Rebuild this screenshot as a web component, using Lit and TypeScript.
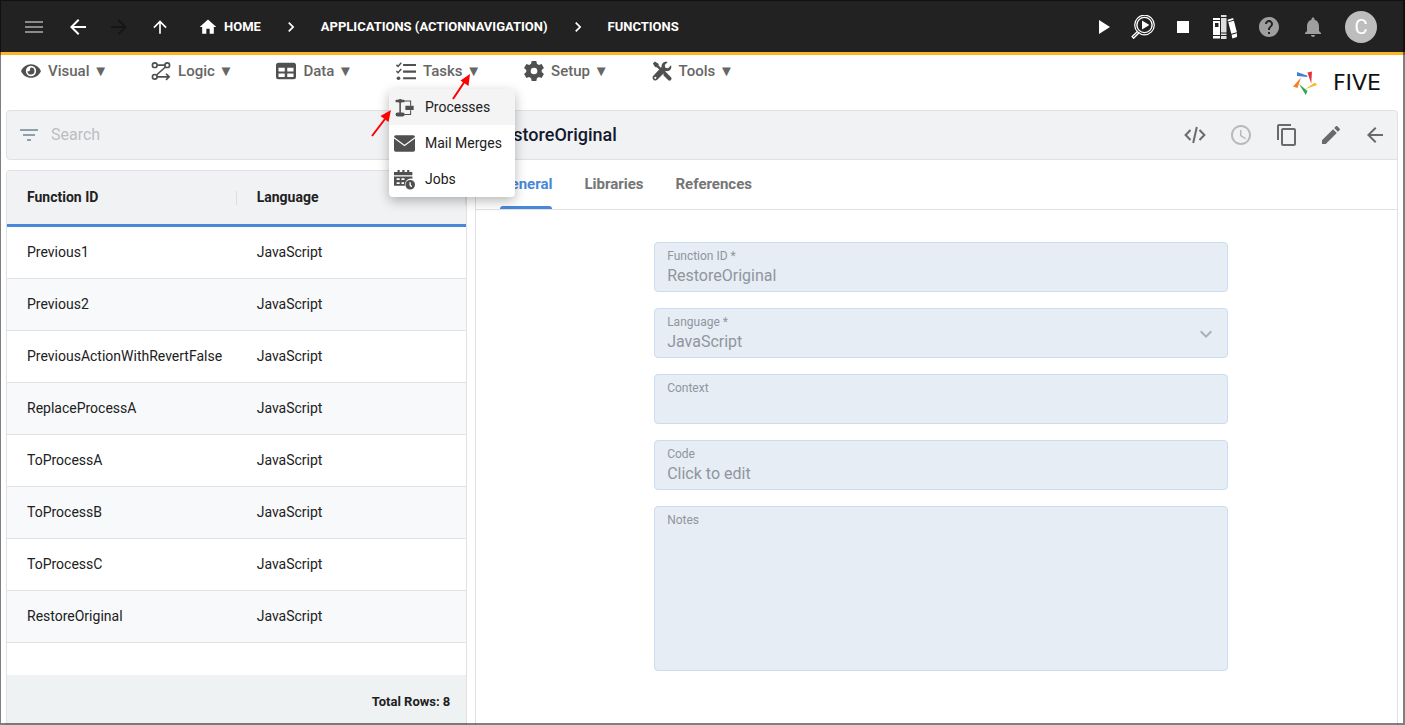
import { LitElement, html, svg, css, nothing } from "lit";
import { customElement, property, state } from "lit/decorators.js";
import { classMap } from "lit/directives/class-map.js";

const icons: Record<string, unknown> = {
  menu: svg`<path d="M3 18h18v-2H3v2zm0-5h18v-2H3v2zm0-7v2h18V6H3z"/>`,
  back: svg`<path d="M20 11H7.83l5.59-5.59L12 4l-8 8 8 8 1.41-1.41L7.83 13H20v-2z"/>`,
  forward: svg`<path d="M12 4l-1.41 1.41L16.17 11H4v2h12.17l-5.58 5.59L12 20l8-8z"/>`,
  up: svg`<path d="M4 12l1.41 1.41L11 7.83V20h2V7.83l5.58 5.59L20 12l-8-8-8 8z"/>`,
  home: svg`<path d="M10 20v-6h4v6h5v-8h3L12 3 2 12h3v8z"/>`,
  chevron: svg`<path d="M10 6L8.59 7.41 13.17 12l-4.58 4.59L10 18l6-6z"/>`,
  down: svg`<path d="M7.41 8.59L12 13.17l4.59-4.58L18 10l-6 6-6-6z"/>`,
  play: svg`<path d="M8 5v14l11-7z"/>`,
  stop: svg`<path d="M6 6h12v12H6z"/>`,
  inspect: svg`<g fill="none" stroke="currentColor"><circle cx="13.5" cy="10" r="9.8" stroke-width="1.2"/><circle cx="13.5" cy="10" r="7.6" stroke-width="1.4"/><path d="M6.8 16.2l-5.6 5.4 1.4 1.6 5.8-5.6" stroke-width="1.4"/></g><path d="M11 5.5v9l7.4-4.5z"/>`,
  books: svg`<path d="M0 3h7v2H0zM0 6h7v14H0zM0 21h7v2.500H0z"/><path d="M8 0h5.500v2H8zM8 3h5.500v14.500H8zM8 18.500h5.500v1.500H8zM8 21h5.500v3H8z" opacity=".85"/><path d="M14.500 4.800l5.600-1.700.5 1.700-5.600 1.600zM15.300 7.300l5.600-1.600 3 11.500-5.600 1.600zM18.600 19.800l5.500-1.600.9 3.400-5.600 1.900z"/><path d="M2 8h3.500v4H2z" fill="#222"/>`,
  help: svg`<path d="M12 2C6.480 2 2 6.480 2 12s4.480 10 10 10 10-4.480 10-10S17.520 2 12 2zm1 17h-2v-2h2v2zm2.070-7.750l-.9.920C13.450 12.900 13 13.500 13 15h-2v-.5c0-1.100.450-2.100 1.170-2.830l1.240-1.260c.370-.360.590-.860.590-1.410 0-1.100-.9-2-2-2s-2 .9-2 2H8c0-2.210 1.790-4 4-4s4 1.790 4 4c0 .880-.360 1.680-.930 2.250z"/>`,
  bell: svg`<path d="M12 22c1.100 0 2-.9 2-2h-4c0 1.100.9 2 2 2zm6-6v-5c0-3.070-1.640-5.640-4.500-6.320V4c0-.830-.670-1.500-1.500-1.500s-1.500.670-1.500 1.500v.680C7.630 5.360 6 7.920 6 11v5l-2 2v1h16v-1l-2-2z"/>`,
  filter: svg`<path d="M10 18h4v-2h-4v2zM3 6v2h18V6H3zm3 7h12v-2H6v2z"/>`,
  code: svg`<path d="M7.500 7L2.600 12l4.900 5M16.500 7l4.900 5-4.900 5M13.800 4l-3.600 16" fill="none" stroke="currentColor" stroke-width="2"/>`,
  clock: svg`<path d="M11.990 2C6.470 2 2 6.480 2 12s4.470 10 9.990 10C17.520 22 22 17.520 22 12S17.520 2 11.990 2zM12 20c-4.420 0-8-3.580-8-8s3.580-8 8-8 8 3.580 8 8-3.580 8-8 8zm.5-13H11v6l5.250 3.150.750-1.230-4.500-2.670z"/>`,
  copy: svg`<path d="M16 1H4c-1.100 0-2 .9-2 2v14h2V3h12V1zm3 4H8c-1.100 0-2 .9-2 2v14c0 1.100.9 2 2 2h11c1.100 0 2-.9 2-2V7c0-1.100-.9-2-2-2zm0 16H8V7h11v14z"/>`,
  edit: svg`<path d="M3 17.250V21h3.750L17.810 9.940l-3.750-3.750L3 17.250zM20.710 7.040c.390-.390.390-1.020 0-1.410l-2.340-2.340c-.390-.390-1.020-.390-1.410 0l-1.830 1.830 3.750 3.750 1.830-1.830z"/>`,
  visual: svg`<path fill-rule="evenodd" d="M12 3.800C6.500 3.800 2 7.300 0 12c2 4.700 6.500 8.200 12 8.200s10-3.500 12-8.200c-2-4.700-6.500-8.200-12-8.200zm0 14.400a6.200 6.200 0 1 1 0-12.400 6.200 6.200 0 0 1 0 12.400z"/><path d="M12 7.800a4.200 4.200 0 1 1-4.200 4.400c1.800.6 3.800-.9 3-3.300z"/>`,
  logic: svg`<g fill="none" stroke="currentColor" stroke-width="2"><circle cx="4.500" cy="5" r="2.800"/><circle cx="19.500" cy="5" r="2.800"/><circle cx="4.500" cy="19" r="2.800"/><path d="M7.300 5h9.400M17.300 7.200L6.700 16.800M7.300 19h14M18 15.300l3.800 3.700-3.800 3.700"/></g>`,
  data: svg`<path fill-rule="evenodd" d="M3 2h18a3 3 0 0 1 3 3v14a3 3 0 0 1-3 3H3a3 3 0 0 1-3-3V5a3 3 0 0 1 3-3zm0 6v4.500h7.500V8zm10.500 0v4.500H21V8zM3 15v4.300h7.500V15zm10.500 0v4.300H21V15z"/>`,
  tasks: svg`<path d="M8.500 3.500H24v2.500H8.500zM8.500 11.500H24V14H8.500zM8.500 19.500H24V22H8.500z"/><circle cx="3" cy="20.700" r="2.200"/><path d="M.5 4.500l2 2L6.300 2.200M.5 12l2 2 3.800-4.300" fill="none" stroke="currentColor" stroke-width="1.800"/>`,
  setup: svg`<path fill-rule="evenodd" d="M9.200 0h5.600l.7 3.400 2.300 1.300 3.300-1.100 2.800 4.800-2.600 2.300v2.600l2.600 2.300-2.800 4.800-3.300-1.100-2.300 1.300-.7 3.400H9.200l-.7-3.400-2.300-1.300-3.300 1.100L.1 15.600l2.600-2.300v-2.600L.1 8.400l2.800-4.800 3.300 1.100 2.300-1.300zM12 8a4 4 0 1 0 0 8 4 4 0 0 0 0-8z"/>`,
  tools: svg`<path d="M1 3l2.500-2.500 4.300 2.700.4 2.500 4.300 4.300-2 2-4.300-4.300-2.500-.5zM13.800 15.200c-.3-1 .2-1.700 1.200-2.200l1.600.2 6.200 6.200c2.200 2.300-1.200 5.700-3.500 3.500l-5.500-5.500z"/><path d="M22.800 5.200l-3.500 3.500-3.300-.7-.7-3.300 3.500-3.500c-3.900-1.600-8 1.300-7.300 5.900L1.600 17.800c-3 3 1.700 7.700 4.700 4.700L16.800 12.100c4.700.8 7.500-3 6-6.900zM4 21.500a1.300 1.300 0 1 1 0-2.600 1.300 1.300 0 0 1 0 2.600z"/>`,
  processes: svg`<path d="M7 2l4 2.500L7 7 3 4.500z"/><rect x="1.800" y="3" width="10.400" height="3" rx="1"/><path d="M13 10h9.500v4.800H13z"/><rect x="1.800" y="17.800" width="10.400" height="4.600" rx="2.300"/><path d="M7 6v13" fill="none" stroke="currentColor" stroke-width="1.800"/><path d="M12 4.500h7V10M12 20h7v-5" fill="none" stroke="currentColor" stroke-width="1.200"/>`,
  mail: svg`<path d="M2 2.500h20a2 2 0 0 1 2 2L12 13.500 0 4.500a2 2 0 0 1 2-2z"/><path d="M0 6.400l12 8.800 12-8.800v13.100a2 2 0 0 1-2 2H2a2 2 0 0 1-2-2z"/>`,
  jobs: svg`<path d="M4 1h2.500v2.500h3V1H12v2.500h3V1h2.500v2.500H21V7H0V3.500h4z"/><path fill-rule="evenodd" d="M0 8.500h21V11a7 7 0 0 0-8.500 8H0zm3 2v2h3.500v-2zm5.500 0v2H12v-2zM3 15v2h3.500v-2zm5.500 0v2h3v-2z"/><path fill-rule="evenodd" d="M18.500 12.500a5.500 5.500 0 1 0 0 11 5.500 5.500 0 0 0 0-11zm-.9 2.500h1.600v3l1.600 1.800-1.200 1-2-2.300z"/>`,
};

@customElement("ui-icon")
export class UiIcon extends LitElement {
  @property() name = "";

  static styles = css`
    :host {
      display: inline-flex;
      flex: none;
      width: 24px;
      height: 24px;
    }
    svg {
      width: 100%;
      height: 100%;
      fill: currentColor;
    }
  `;

  render() {
    return html`<svg viewBox="0 0 24 24" aria-hidden="true">${icons[this.name]}</svg>`;
  }
}

@customElement("app-root")
export class AppRoot extends LitElement {
  @state() private openMenu = "Tasks";
  @state() private tab = "General";

  private menus = [
    { label: "Visual", icon: "visual" },
    { label: "Logic", icon: "logic" },
    { label: "Data", icon: "data" },
    { label: "Tasks", icon: "tasks" },
    { label: "Setup", icon: "setup" },
    { label: "Tools", icon: "tools" },
  ];

  private taskItems = [
    { label: "Processes", icon: "processes" },
    { label: "Mail Merges", icon: "mail" },
    { label: "Jobs", icon: "jobs" },
  ];

  private rows = [
    "Previous1",
    "Previous2",
    "PreviousActionWithRevertFalse",
    "ReplaceProcessA",
    "ToProcessA",
    "ToProcessB",
    "ToProcessC",
    "RestoreOriginal",
  ];

  static styles = css`
    :host {
      position: relative;
      display: flex;
      flex-direction: column;
      height: 100vh;
      overflow: hidden;
      background: #fff;
      color: #212121;
      font-family: Roboto, "Liberation Sans", sans-serif;
      font-size: 14px;
      line-height: 20px;
    }
    :host::after {
      content: "";
      position: absolute;
      inset: 0;
      border: solid rgba(0, 0, 0, 0.5);
      border-width: 1px 2px 2px 1px;
      pointer-events: none;
    }
    * {
      box-sizing: border-box;
    }
    button,
    input,
    select,
    textarea {
      margin: 0;
      padding: 0;
      border: 0;
      background: none;
      color: inherit;
      font: inherit;
      outline: 0;
    }
    button {
      display: inline-flex;
      align-items: center;
      cursor: pointer;
    }
    a {
      color: inherit;
      text-decoration: none;
    }

    .topbar {
      display: flex;
      flex: none;
      align-items: center;
      justify-content: space-between;
      height: 55px;
      padding: 2px 28px 0 22px;
      border-bottom: 3px solid #fbb52b;
      background: #222;
      color: #fff;
    }
    .nav,
    .crumbs,
    .run,
    .account,
    .tools {
      display: flex;
      align-items: center;
    }
    .nav {
      gap: 20px;
    }
    .history {
      display: flex;
      align-items: center;
      gap: 17px;
      margin-right: 6px;
    }
    .history .small {
      padding: 0 2px;
    }
    .small ui-icon,
    .crumbs ui-icon {
      width: 20px;
      height: 20px;
    }
    .dim {
      color: #8a8a8a;
    }
    .off {
      color: #161616;
    }
    .crumbs {
      gap: 20px;
      font-size: 13px;
      font-weight: 700;
    }
    .crumbs a {
      display: flex;
      align-items: center;
      gap: 6px;
    }
    .run {
      gap: 16px;
    }
    .account {
      gap: 20px;
    }
    .right {
      display: flex;
      gap: 18px;
    }
    .muted {
      color: #9e9e9e;
    }
    .avatar {
      justify-content: center;
      width: 32px;
      height: 32px;
      border-radius: 50%;
      background: #bdbdbd;
      color: #fff;
      font-size: 20px;
    }

    .menubar {
      display: flex;
      flex: none;
      justify-content: space-between;
      height: 55px;
      padding: 6px 24px 0 21px;
    }
    .menus {
      display: flex;
      gap: 43px;
      margin: 0;
      padding: 0;
      list-style: none;
    }
    .menus > li {
      position: relative;
    }
    .menu-button {
      gap: 7px;
      color: #666;
      font-size: 15px;
      font-weight: 500;
    }
    .menu-button ui-icon {
      width: 20px;
      height: 20px;
      color: #505050;
    }
    .dropdown {
      position: absolute;
      z-index: 2;
      top: 28px;
      left: -7px;
      width: 126px;
      overflow: hidden;
      border-radius: 4px;
      background: #fff;
      box-shadow: 0 4px 12px rgba(0, 0, 0, 0.28);
    }
    .dropdown button {
      width: 100%;
      height: 36px;
      gap: 10px;
      padding-left: 5px;
      white-space: nowrap;
    }
    .dropdown button:first-child {
      background: #f4f4f4;
    }
    .dropdown ui-icon {
      width: 21px;
      height: 21px;
      color: #505050;
    }
    .pointers {
      position: absolute;
      z-index: 3;
      top: 8px;
      left: -28px;
      width: 110px;
      height: 72px;
      pointer-events: none;
    }
    .brand {
      display: flex;
      align-items: center;
      justify-content: space-between;
      width: 88px;
      height: 44px;
      color: #111;
      font-family: "DejaVu Sans", sans-serif;
      font-size: 22px;
    }
    .brand svg {
      width: 24px;
      height: 24px;
    }

    .workspace {
      display: grid;
      flex: 1;
      grid-template-columns: 1fr 2fr;
      gap: 8px;
      min-height: 0;
      padding: 0 7px 0 6px;
    }
    .list,
    .detail {
      display: flex;
      flex-direction: column;
      min-width: 0;
      min-height: 0;
    }
    .list {
      gap: 10px;
    }
    .search {
      display: flex;
      flex: none;
      align-items: center;
      gap: 10px;
      height: 50px;
      padding: 0 10px;
      border: 1px solid #dfe1e4;
      border-radius: 4px;
      background: #f1f2f4;
      color: #90a0a8;
      font-size: 16px;
    }
    .search input {
      flex: 1;
      min-width: 0;
    }
    .search input::placeholder {
      color: #bcbec0;
      opacity: 1;
    }
    .grid {
      display: flex;
      flex: 1;
      flex-direction: column;
      min-height: 0;
      overflow: hidden;
      border: 1px solid #dfe1e4;
      border-bottom: 0;
      border-radius: 4px 4px 0 0;
    }
    table {
      width: 100%;
      border-collapse: separate;
      border-spacing: 0;
      table-layout: fixed;
    }
    th,
    td {
      padding: 0 20px 2px;
      text-align: left;
      white-space: nowrap;
    }
    th {
      height: 56px;
      border-bottom: 3px solid #4788d9;
      background: #f1f2f4 linear-gradient(#dcdee0, #dcdee0) no-repeat right center / 1px 14px;
      font-weight: 700;
    }
    td {
      height: 52px;
      border-bottom: 1px solid #e0e2e4;
    }
    tbody tr:nth-child(even) {
      background: #f8f9fb;
    }
    .total {
      height: 50px;
      margin-top: auto;
      padding: 17px 16px 0;
      background: #eef2f3;
      font-size: 13px;
      font-weight: 700;
      text-align: right;
    }

    .titlebar {
      display: flex;
      flex: none;
      align-items: center;
      justify-content: space-between;
      height: 50px;
      padding: 0 10px 0 16px;
      border: 1px solid #dfe1e4;
      border-radius: 4px 4px 0 0;
      background: #f1f2f4;
    }
    h1 {
      margin: 0;
      color: #14192c;
      font-size: 18px;
      font-weight: 500;
    }
    .tools {
      gap: 20px;
      color: #6a6a6a;
    }
    .tools > div {
      display: flex;
      gap: 22px;
    }
    .tools button:disabled {
      color: #b8b9bb;
    }
    .panel {
      flex: 1;
      min-height: 0;
      overflow: hidden;
      border: solid #dfe1e4;
      border-width: 0 1px;
    }
    .tabs {
      display: flex;
      gap: 32px;
      height: 50px;
      padding: 0 24px;
      border-bottom: 1px solid #dfe1e4;
    }
    .tabs button {
      position: relative;
      padding-bottom: 2px;
      color: #757575;
      font-size: 15px;
      font-weight: 700;
    }
    .tabs .active {
      color: #4788d9;
    }
    .tabs .active::after {
      content: "";
      position: absolute;
      right: 0;
      bottom: 0;
      left: 0;
      height: 3px;
      border-radius: 3px 3px 0 0;
      background: #4788d9;
    }
    form {
      display: flex;
      flex-direction: column;
      gap: 16px;
      max-width: 574px;
      margin: 32px auto 0;
    }
    .form-area {
      padding: 0 15px 0 24px;
    }
    .field {
      display: grid;
      grid-template-rows: 16px 1fr;
      grid-template-columns: 1fr 24px;
      padding: 5px 9px 3px 12px;
      border: 1px solid #cbddee;
      border-radius: 4px;
      background: #e6edf5;
      color: #8f969d;
      font-size: 16px;
    }
    .field label {
      grid-row: 1;
      grid-column: 1 / -1;
      font-size: 12px;
      line-height: 16px;
    }
    .field input,
    .field select,
    .field textarea {
      grid-row: 2;
      grid-column: 1 / -1;
      height: 24px;
      line-height: 24px;
      opacity: 1;
      appearance: none;
      resize: none;
    }
    .field textarea {
      height: 139px;
    }
    .field ui-icon {
      grid-row: 1 / -1;
      grid-column: 2;
      align-self: center;
      color: #a9b0b7;
      pointer-events: none;
    }
  `;

  private iconButton(name: string, label: string, cls = "", disabled = false) {
    return html`<button class=${cls} aria-label=${label} ?disabled=${disabled}><ui-icon name=${name}></ui-icon></button>`;
  }

  private renderDropdown() {
    return html`
      <div class="dropdown" role="menu">
        ${this.taskItems.map(
          (item) => html`<button role="menuitem"><ui-icon name=${item.icon}></ui-icon>${item.label}</button>`
        )}
      </div>
      <svg class="pointers" viewBox="0 0 110 72" aria-hidden="true">
        <g stroke="#f00" stroke-width="2" fill="#f00">
          <path d="M85 30L97 12M4 67L17 50" />
          <path stroke="none" d="M102 5l-1.500 12-8-5.500zM23 41l-2.500 12-8-6z" />
        </g>
      </svg>
    `;
  }

  render() {
    return html`
      <header class="topbar">
        <nav class="nav" aria-label="Breadcrumb">
          ${this.iconButton("menu", "Menu", "dim")}
          <div class="history">
            ${this.iconButton("back", "Back")} ${this.iconButton("forward", "Forward", "off")}
            ${this.iconButton("up", "Up", "small")}
          </div>
          <div class="crumbs">
            <a href="#home"><ui-icon name="home"></ui-icon>HOME</a>
            <ui-icon name="chevron"></ui-icon>
            <a href="#applications">APPLICATIONS (ACTIONNAVIGATION)</a>
            <ui-icon name="chevron"></ui-icon>
            <a href="#functions">FUNCTIONS</a>
          </div>
        </nav>
        <div class="right">
          <div class="run">
            ${this.iconButton("play", "Run")} ${this.iconButton("inspect", "Inspect")} ${this.iconButton("stop", "Stop")}
          </div>
          <div class="account">
            ${this.iconButton("books", "Library")} ${this.iconButton("help", "Help", "muted")}
            ${this.iconButton("bell", "Notifications", "muted")}
            <button class="avatar">C</button>
          </div>
        </div>
      </header>

      <div class="menubar">
        <ul class="menus">
          ${this.menus.map(
            (m) => html`<li>
              <button
                class="menu-button"
                aria-expanded=${this.openMenu === m.label}
                @click=${() => (this.openMenu = this.openMenu === m.label ? "" : m.label)}
              >
                <ui-icon name=${m.icon}></ui-icon><span>${m.label} ▼</span>
              </button>
              ${m.label === "Tasks" && this.openMenu === "Tasks" ? this.renderDropdown() : nothing}
            </li>`
          )}
        </ul>
        <div class="brand">
          <svg viewBox="0 0 24 24" aria-hidden="true">
            <path d="M4 1l10 3.500.5 1.500L4 5z" fill="#3f7fd6" />
            <path d="M14.500 1.500L19 .5l-.8 12z" fill="#e53238" />
            <path d="M24 14l-12 4.300L22 11.500z" fill="#fbb724" />
            <path d="M6 13l8.500 7-1.800 4z" fill="#34a853" />
            <path d="M8 6.500L4.500 17 0 15.500z" fill="#f5822a" />
          </svg>
          <span>FIVE</span>
        </div>
      </div>

      <main class="workspace">
        <section class="list">
          <label class="search">
            <ui-icon name="filter"></ui-icon>
            <input type="search" placeholder="Search" aria-label="Search" />
          </label>
          <div class="grid">
            <table>
              <thead>
                <tr>
                  <th scope="col">Function ID</th>
                  <th scope="col">Language</th>
                </tr>
              </thead>
              <tbody>
                ${this.rows.map(
                  (id) => html`<tr>
                    <td>${id}</td>
                    <td>JavaScript</td>
                  </tr>`
                )}
              </tbody>
            </table>
            <div class="total">Total Rows: ${this.rows.length}</div>
          </div>
        </section>

        <section class="detail">
          <div class="titlebar">
            <h1>RestoreOriginal</h1>
            <div class="tools">
              <div>
                ${this.iconButton("code", "Code")} ${this.iconButton("clock", "History", "", true)}
                ${this.iconButton("copy", "Copy")}
              </div>
              ${this.iconButton("edit", "Edit")} ${this.iconButton("back", "Close")}
            </div>
          </div>
          <div class="panel">
            <div class="tabs" role="tablist">
              ${["General", "Libraries", "References"].map(
                (t) => html`<button
                  role="tab"
                  aria-selected=${this.tab === t}
                  class=${classMap({ active: this.tab === t })}
                  @click=${() => (this.tab = t)}
                >
                  ${t}
                </button>`
              )}
            </div>
            <div class="form-area">
              <form>
                <div class="field">
                  <label for="function-id">Function ID *</label>
                  <input id="function-id" value="RestoreOriginal" readonly />
                </div>
                <div class="field">
                  <label for="language">Language *</label>
                  <select id="language">
                    <option>JavaScript</option>
                  </select>
                  <ui-icon name="down"></ui-icon>
                </div>
                <div class="field">
                  <label for="context">Context</label>
                  <input id="context" readonly />
                </div>
                <div class="field">
                  <label for="code">Code</label>
                  <input id="code" value="Click to edit" readonly />
                </div>
                <div class="field">
                  <label for="notes">Notes</label>
                  <textarea id="notes" readonly></textarea>
                </div>
              </form>
            </div>
          </div>
        </section>
      </main>
    `;
  }
}
